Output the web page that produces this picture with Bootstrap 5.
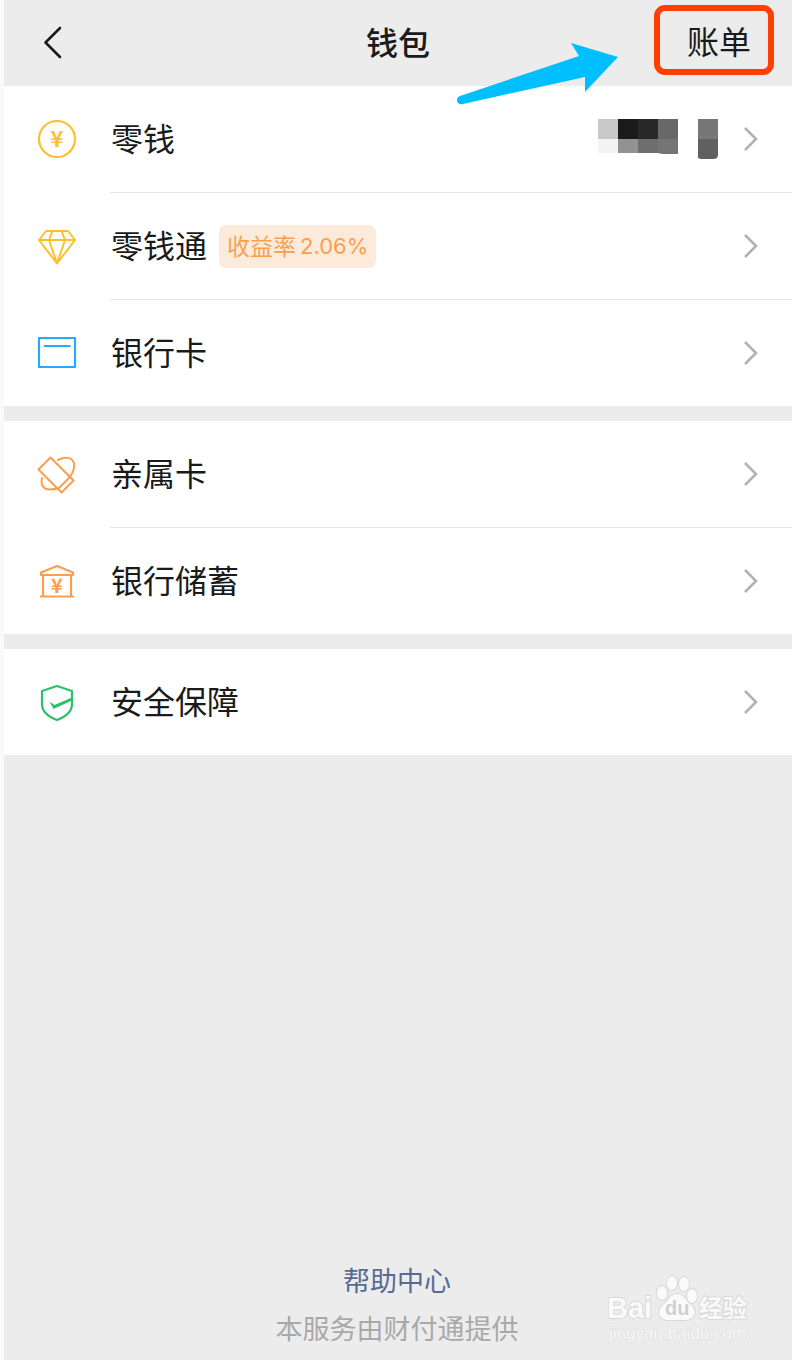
<!DOCTYPE html>
<html lang="zh-CN">
<head>
<meta charset="utf-8">
<meta name="viewport" content="width=device-width, initial-scale=1">
<title>钱包</title>
<link href="https://cdn.jsdelivr.net/npm/bootstrap@5.3.0/dist/css/bootstrap.min.css" rel="stylesheet">
<style>
  body {
    font-family: "Noto Sans CJK SC", sans-serif;
    font-size: 32px;
    line-height: 48px;
    color: #1a1a1a;
    background: #ececec;
    border-left: 4px solid #fafafa;
  }
  a { color: inherit; text-decoration: none; }
  .topbar { height: 86px; padding: 0 18px; }
  .topbar-side { flex: 1 1 0; }
  .topbar h1 { font-size: 32px; line-height: 48px; font-weight: 500; padding-bottom: 4px; }
  .back-btn { color: #1a1a1a; line-height: 0; margin-left: 18px; }
  .bill-link {
    border: 6px solid #ff4000;
    border-radius: 11px;
    padding: 5px 17px 5px 27px;
    margin-bottom: 6px;
  }
  .bill-link span { display: block; }
  .pointer-arrow { top: 40px; right: 172px; z-index: 2; }
  .wallet-groups { gap: 15px; }
  .wallet-group { background: #fff; }
  .wallet-row { min-height: 106px; padding: 0 33px; }
  .wallet-row > svg { flex: none; }
  .wallet-icon { margin-right: 34px; }
  .wallet-label { padding-bottom: 4px; }
  .wallet-group li + li::before {
    content: "";
    display: block;
    height: 1px;
    margin-left: 106px;
    background: #e6e6e6;
  }
  .rate-tag {
    font-size: 23px;
    line-height: 40px;
    color: #fb9f4f;
    background: #fcebdb;
    border-radius: 7px;
    padding: 0 8px 3px;
    margin-left: 12px;
    gap: 4px;
  }
  .rate-value { font-family: Inter, sans-serif; font-size: 22px; padding-top: 2px; line-height: 38px; }
  .pixel-mask { margin-right: 24px; }
  .foot { font-size: 27px; padding: 0 2px 8px 0; color: #a9a9a9; }
  .foot a { color: #576b95; }
  .watermark { right: 42px; bottom: 14px; }
</style>
</head>
<body>
<div class="min-vh-100 d-flex flex-column position-relative">
  <header class="topbar d-flex align-items-center position-relative">
    <div class="topbar-side d-flex">
      <button type="button" class="back-btn btn p-0 border-0" aria-label="返回">
        <svg width="24" height="36" viewBox="0 0 24 36" fill="none" stroke="#1a1a1a" stroke-width="2.6" stroke-linecap="round" stroke-linejoin="round"><path d="M20 3 5.500 17.500 20 32"/></svg>
      </button>
    </div>
    <h1 class="m-0">钱包</h1>
    <div class="topbar-side d-flex justify-content-end">
      <a href="#" class="bill-link"><span>账单</span></a>
    </div>
    <svg class="pointer-arrow position-absolute" width="164" height="66" viewBox="456 40 164 66" aria-hidden="true"><path fill="#00bfff" d="M460 96 579 56 571 43 618 57 585 92V77L463 104Q457 105 457 100 457 97 460 96Z"/></svg>
  </header>

  <main class="wallet-groups d-flex flex-column">
    <ul class="wallet-group list-unstyled m-0">
      <li><a href="#" class="wallet-row d-flex align-items-center">
        <svg class="wallet-icon" width="40" height="40" viewBox="0 0 40 40" fill="none" stroke="#fcc02e" stroke-width="2.200"><circle cx="20" cy="20" r="18"/><text x="20" y="28" text-anchor="middle" font-size="22" font-weight="700" fill="#fcc02e" stroke="none">¥</text></svg>
        <span class="wallet-label">零钱</span>
        <svg class="pixel-mask ms-auto" width="121" height="40" viewBox="0 0 121 40" aria-hidden="true">
          <path fill="#c9c9c9" d="M0 0h20v20H0z"/><path fill="#1b1b1b" d="M20 0h20v20H20z"/><path fill="#282828" d="M40 0h20v20H40z"/><path fill="#686868" d="M60 0h20v20H60z"/>
          <path fill="#f4f4f4" d="M0 20h20v14H0z"/><path fill="#929292" d="M20 20h20v14H20z"/><path fill="#6e6e6e" d="M40 20h20v14H40z"/><path fill="#757575" d="M60 20h20v15H64l-4-1z"/>
          <path fill="#777" d="M100 0h20v20h-20z"/><path fill="#606060" d="M100 20h20v16q0 4-5 4h-12l-3-1z"/>
        </svg>
        <svg width="16" height="26" viewBox="0 0 16 26" fill="none" stroke="#b2b2b2" stroke-width="2.600"><path d="m2 2 11 11L2 24"/></svg>
      </a></li>
      <li><a href="#" class="wallet-row d-flex align-items-center">
        <svg class="wallet-icon" width="40" height="40" viewBox="0 0 40 40" fill="none" stroke="#fcc02e" stroke-width="2" stroke-linejoin="round"><path d="M9 5h22l7 9L20 37.500 2 14zM2 14h36M15.500 5 12 14l8 23.500L28 14l-3.500-9"/></svg>
        <span class="wallet-label">零钱通</span>
        <span class="rate-tag d-flex"><span>收益率</span><span class="rate-value">2.06%</span></span>
        <svg class="ms-auto" width="16" height="26" viewBox="0 0 16 26" fill="none" stroke="#b2b2b2" stroke-width="2.600"><path d="m2 2 11 11L2 24"/></svg>
      </a></li>
      <li><a href="#" class="wallet-row d-flex align-items-center">
        <svg class="wallet-icon" width="40" height="40" viewBox="0 0 40 40" fill="none" stroke="#2aa9fa" stroke-width="2.200" stroke-linejoin="round"><path d="M2 5h36v29H2zM7 13h26.500"/></svg>
        <span class="wallet-label">银行卡</span>
        <svg class="ms-auto" width="16" height="26" viewBox="0 0 16 26" fill="none" stroke="#b2b2b2" stroke-width="2.600"><path d="m2 2 11 11L2 24"/></svg>
      </a></li>
    </ul>

    <ul class="wallet-group list-unstyled m-0">
      <li><a href="#" class="wallet-row d-flex align-items-center">
        <svg class="wallet-icon" width="40" height="40" viewBox="0 0 40 40" fill="none" stroke="#fb9f4f" stroke-width="2" stroke-linejoin="round" stroke-linecap="round"><path d="M13.500 3.500 36.500 26.500 24.500 38.500 1.500 15.500zM33 23 21 35M21 6C27 3 34 3 36 7c2.500 4.500 1 10-3 16M5 24c-1.500 7 1 11.500 8 11.500 3 0 5.500-.5 8-1.500"/></svg>
        <span class="wallet-label">亲属卡</span>
        <svg class="ms-auto" width="16" height="26" viewBox="0 0 16 26" fill="none" stroke="#b2b2b2" stroke-width="2.600"><path d="m2 2 11 11L2 24"/></svg>
      </a></li>
      <li><a href="#" class="wallet-row d-flex align-items-center">
        <svg class="wallet-icon" width="40" height="40" viewBox="0 0 40 40" fill="none" stroke="#fb9f4f" stroke-width="2.200" stroke-linejoin="round"><path d="M4 14v-2.500L20 5l16 6.500V14zM6 14v21.500M34 14v21.500M3 35.500h34"/><text x="20" y="32" text-anchor="middle" font-size="20" font-weight="700" fill="#fb9f4f" stroke="none">¥</text></svg>
        <span class="wallet-label">银行储蓄</span>
        <svg class="ms-auto" width="16" height="26" viewBox="0 0 16 26" fill="none" stroke="#b2b2b2" stroke-width="2.600"><path d="m2 2 11 11L2 24"/></svg>
      </a></li>
    </ul>

    <ul class="wallet-group list-unstyled m-0">
      <li><a href="#" class="wallet-row d-flex align-items-center">
        <svg class="wallet-icon" width="40" height="40" viewBox="0 0 40 40" fill="none" stroke="#2cc06b" stroke-width="2.200" stroke-linejoin="round"><path d="m20 4 15 5v13c0 8-7 13-15 16C12 35 5 30 5 22V9z"/><path fill="#2cc06b" stroke="none" d="m12.500 19.500 5 3.500L35 15.500v3L16.500 27z"/></svg>
        <span class="wallet-label">安全保障</span>
        <svg class="ms-auto" width="16" height="26" viewBox="0 0 16 26" fill="none" stroke="#b2b2b2" stroke-width="2.600"><path d="m2 2 11 11L2 24"/></svg>
      </a></li>
    </ul>
  </main>

  <footer class="foot mt-auto text-center">
    <div><a href="#">帮助中心</a></div>
    <div>本服务由财付通提供</div>
  </footer>

  <svg class="watermark position-absolute" width="144" height="72" viewBox="606 1274 144 72" fill="#fafafa" stroke="#d9d9d9" stroke-width="2" paint-order="stroke" stroke-linejoin="round">
    <text x="607" y="1318" font-family="Liberation Sans, sans-serif" font-weight="700" font-size="29">Bai</text>
    <ellipse cx="662" cy="1293" rx="5" ry="7"/><ellipse cx="672" cy="1283" rx="5" ry="7"/><ellipse cx="684" cy="1284" rx="5" ry="7"/><ellipse cx="692" cy="1296" rx="5" ry="7"/>
    <path d="M677 1294c7 0 9 7 13 10 8 6 5 16-4 16-5 0-13 0-18 0-10 0-12-10-4-16 4-3 6-10 13-10z"/>
    <text x="665" y="1315" font-family="Liberation Sans, sans-serif" font-weight="700" font-size="20" fill="#d0d0d0" stroke="none">du</text>
    <text x="699" y="1317" font-family="Noto Sans CJK SC, sans-serif" font-weight="700" font-size="24">经验</text>
    <text x="609" y="1339" font-family="Liberation Sans, sans-serif" font-size="17" stroke-width="1">jingyan.baidu.com</text>
  </svg>
</div>
<script src="https://cdn.jsdelivr.net/npm/bootstrap@5.3.0/dist/js/bootstrap.bundle.min.js"></script>
</body>
</html>
